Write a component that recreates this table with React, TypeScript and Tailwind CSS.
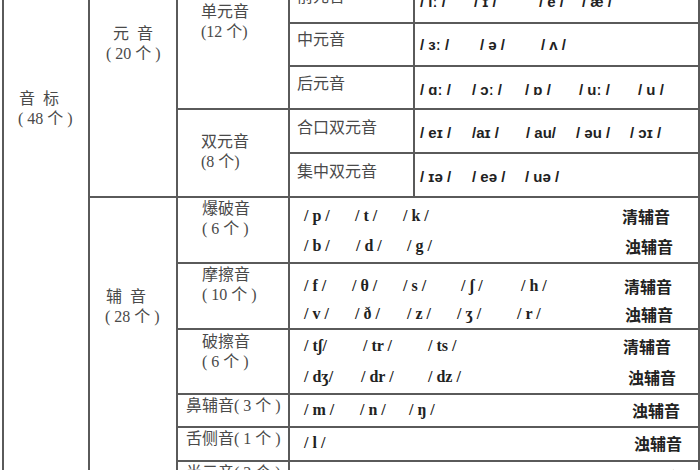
const serif = "font-['Liberation_Serif','Noto_Sans_CJK_SC',serif] text-[16px] leading-[20px] text-[#4a4a4a]";
const cell = "border-2 border-[#5a5a5a] align-top p-0";

type Tok = [string, string];

const vowelRows: { label: string; h: string; lpt: string; spt: string; toks: Tok[] }[] = [
  { label: "前元音", h: "h-[43px]", lpt: "pt-[6px]", spt: "pt-[11px]", toks: [["/ iː /", "w-[54px]"], ["/ ɪ /", "w-[65px]"], ["/ e /", "w-[43px]"], ["/ æ /", "w-[50px]"]] },
  { label: "中元音", h: "h-[43px]", lpt: "pt-[6px]", spt: "pt-[11px]", toks: [["/ ɜː /", "w-[60px]"], ["/ ə /", "w-[61px]"], ["/ ʌ /", "w-[50px]"]] },
  { label: "后元音", h: "h-[43px]", lpt: "pt-[7px]", spt: "pt-[13px]", toks: [["/ ɑː /", "w-[52px]"], ["/ ɔː /", "w-[53px]"], ["/ ɒ /", "w-[54px]"], ["/ uː /", "w-[59px]"], ["/ u /", "w-[50px]"]] },
  { label: "合口双元音", h: "h-[44px]", lpt: "pt-[8px]", spt: "pt-[13px]", toks: [["/ eɪ /", "w-[52px]"], ["/aɪ /", "w-[54px]"], ["/ au/", "w-[50px]"], ["/ əu /", "w-[54px]"], ["/ ɔɪ /", "w-[50px]"]] },
  { label: "集中双元音", h: "h-[44px]", lpt: "pt-[8px]", spt: "pt-[13px]", toks: [["/ ɪə /", "w-[52px]"], ["/ eə /", "w-[53px]"], ["/ uə /", "w-[50px]"]] },
];

type Line = { toks: Tok[]; tag: string; pr: string };
const consRows: { label: string[]; lpl: string; lpt: string; h: string; spt: string; lineH: string; lines: Line[] }[] = [
  {
    label: ["爆破音", "( 6 个 )"], lpl: "pl-[24px]", lpt: "pt-[1px]", h: "h-[66px]", spt: "pt-[3px]", lineH: "h-[30px]",
    lines: [
      { toks: [["/ p /", "w-[51px]"], ["/ t /", "w-[48px]"], ["/ k /", "w-[40px]"]], tag: "清辅音", pr: "pr-[28px]" },
      { toks: [["/ b /", "w-[52px]"], ["/ d /", "w-[51px]"], ["/ g /", "w-[40px]"]], tag: "浊辅音", pr: "pr-[25px]" },
    ],
  },
  {
    label: ["摩擦音", "( 10 个 )"], lpl: "pl-[24px]", lpt: "pt-[1px]", h: "h-[65px]", spt: "pt-[8px]", lineH: "h-[28px]",
    lines: [
      { toks: [["/ f /", "w-[48px]"], ["/ θ /", "w-[51px]"], ["/ s /", "w-[58px]"], ["/ ʃ /", "w-[60px]"], ["/ h /", "w-[40px]"]], tag: "清辅音", pr: "pr-[26px]" },
      { toks: [["/ v /", "w-[51px]"], ["/ ð /", "w-[52px]"], ["/ z /", "w-[50px]"], ["/ ʒ /", "w-[60px]"], ["/ r /", "w-[40px]"]], tag: "浊辅音", pr: "pr-[25px]" },
    ],
  },
  {
    label: ["破擦音", "( 6 个 )"], lpl: "pl-[24px]", lpt: "pt-[2px]", h: "h-[65px]", spt: "pt-[0px]", lineH: "h-[31px]",
    lines: [
      { toks: [["/ tʃ/", "w-[59px]"], ["/ tr /", "w-[65px]"], ["/ ts /", "w-[40px]"]], tag: "清辅音", pr: "pr-[27px]" },
      { toks: [["/ dʒ/", "w-[57px]"], ["/ dr /", "w-[67px]"], ["/ dz /", "w-[40px]"]], tag: "浊辅音", pr: "pr-[22px]" },
    ],
  },
  {
    label: ["鼻辅音( 3 个 )"], lpl: "pl-[8px]", lpt: "pt-[1px]", h: "h-[33px]", spt: "pt-[1px]", lineH: "h-[28px]",
    lines: [{ toks: [["/ m /", "w-[56px]"], ["/ n /", "w-[49px]"], ["/ ŋ /", "w-[40px]"]], tag: "浊辅音", pr: "pr-[18px]" }],
  },
  {
    label: ["舌侧音( 1 个 )"], lpl: "pl-[8px]", lpt: "pt-[1px]", h: "h-[34px]", spt: "pt-[1px]", lineH: "h-[28px]",
    lines: [{ toks: [["/ l /", "w-[40px]"]], tag: "浊辅音", pr: "pr-[16px]" }],
  },
  {
    label: ["半元音( 2 个 )"], lpl: "pl-[8px]", lpt: "pt-[1px]", h: "h-[34px]", spt: "pt-[1px]", lineH: "h-[28px]",
    lines: [{ toks: [["/ j /", "w-[48px]"], ["/ w /", "w-[40px]"]], tag: "浊辅音", pr: "pr-[17px]" }],
  },
];

function VowelSymbols({ toks }: { toks: Tok[] }) {
  return (
    <div className="flex font-['Liberation_Sans','DejaVu_Sans',sans-serif] text-[15px] font-bold leading-[20px] text-[#222]">
      {toks.map(([t, w], i) => (
        <span key={i} className={`${w} shrink-0 whitespace-pre`}>
          {t}
        </span>
      ))}
    </div>
  );
}

export default function App() {
  return (
    <div className="h-[470px] w-[700px] overflow-hidden bg-white">
      <table className="-mt-[21px] ml-[2px] w-[696px] table-fixed border-collapse">
        <colgroup>
          <col className="w-[86px]" />
          <col className="w-[88px]" />
          <col className="w-[112px]" />
          <col className="w-[125px]" />
          <col className="w-[285px]" />
        </colgroup>
        <tbody>
          {vowelRows.map((r, i) => (
            <tr key={r.label} className={r.h}>
              {i === 0 && (
                <>
                  <td rowSpan={11} className={`${cell} ${serif} pt-[108px]`}>
                    <div className="pl-[15px]">音&nbsp;&nbsp;标</div>
                    <div className="pl-[14px]">( 48 个 )</div>
                  </td>
                  <td rowSpan={5} className={`${cell} ${serif} pt-[43px]`}>
                    <div className="pl-[23px]">元&nbsp;&nbsp;音</div>
                    <div className="pl-[16px]">( 20 个 )</div>
                  </td>
                  <td rowSpan={3} className={`${cell} ${serif} pt-[21px] pl-[23px]`}>
                    <div>单元音</div>
                    <div>(12 个)</div>
                  </td>
                </>
              )}
              {i === 3 && (
                <td rowSpan={2} className={`${cell} ${serif} pt-[22px] pl-[23px]`}>
                  <div>双元音</div>
                  <div>(8 个)</div>
                </td>
              )}
              <td className={`${cell} ${serif} ${r.lpt} pl-[7px]`}>{r.label}</td>
              <td className={`${cell} ${r.spt} pl-[5px]`}>
                <VowelSymbols toks={r.toks} />
              </td>
            </tr>
          ))}
          {consRows.map((r, i) => (
            <tr key={r.label[0]} className={r.h}>
              {i === 0 && (
                <td rowSpan={6} className={`${cell} ${serif} pt-[89px]`}>
                  <div className="pl-[16px]">辅&nbsp;&nbsp;音</div>
                  <div className="pl-[15px]">( 28 个 )</div>
                </td>
              )}
              <td className={`${cell} ${serif} ${r.lpt} ${r.lpl} whitespace-nowrap`}>
                {r.label.map((l) => (
                  <div key={l}>{l}</div>
                ))}
              </td>
              <td colSpan={2} className={`${cell} ${r.spt} pl-[14px]`}>
                {r.lines.map((ln) => (
                  <div key={ln.tag + ln.toks[0][0]} className={`${r.lineH} ${ln.pr} flex items-center justify-between`}>
                    <div className="flex font-['Liberation_Serif','DejaVu_Serif',serif] text-[16px] font-bold text-[#222]">
                      {ln.toks.map(([t, w], k) => (
                        <span key={k} className={`${w} shrink-0 whitespace-pre`}>
                          {t}
                        </span>
                      ))}
                    </div>
                    <span className="font-['Noto_Sans_CJK_SC',sans-serif] text-[16px] font-bold text-[#222]">{ln.tag}</span>
                  </div>
                ))}
              </td>
            </tr>
          ))}
        </tbody>
      </table>
    </div>
  );
}
